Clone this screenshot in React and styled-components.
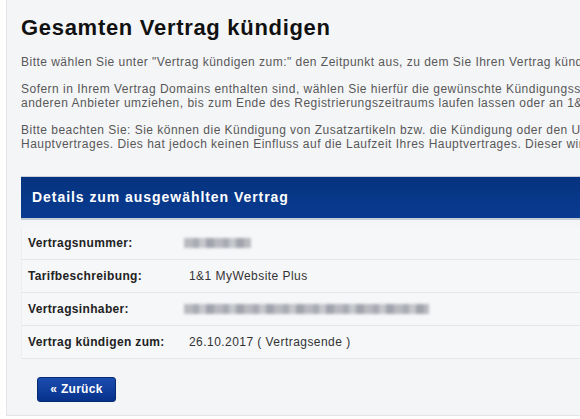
import React from "react"
import styled, { createGlobalStyle } from "styled-components"

const GlobalStyle = createGlobalStyle`
  html, body {
    margin: 0;
    padding: 0;
    background: #ffffff;
    overflow: hidden;
  }
  body {
    font-family: "Liberation Sans", Arial, sans-serif;
  }
`

// Contract rows shown in the details table
const rows = [
  { label: "Vertragsnummer:", hidden: 67 },
  { label: "Tarifbeschreibung:", value: "1&1 MyWebsite Plus" },
  { label: "Vertragsinhaber:", hidden: 245 },
  { label: "Vertrag kündigen zum:", value: "26.10.2017 ( Vertragsende )" },
]

const Panel = styled.main`
  width: 820px;
  margin-left: 6px;
  padding: 15px 0 13px 14px;
  background: #f4f5f7;
  border-left: 1px solid #e3e4e8;
  border-bottom: 1px solid #e3e4e8;
`

const Title = styled.h1`
  margin: 0 0 14px;
  font-size: 22px;
  line-height: 26px;
  font-weight: bold;
  letter-spacing: 0.7px;
  color: #111;
`

const Text = styled.p`
  margin: 0 0 12px;
  font-size: 12px;
  line-height: 14.5px;
  letter-spacing: 0.48px;
  color: #585858;
  white-space: nowrap;
`

const Details = styled.section`
  margin-top: 24px;
`

const Bar = styled.div`
  height: 41px;
  display: flex;
  align-items: center;
  padding-left: 11px;
  background: linear-gradient(#06337f, #083b91);
  border-top: 1px solid #c9ced6;
  border-bottom: 2px solid #c6ccd6;
  color: #fff;
  font-size: 14px;
  font-weight: bold;
  letter-spacing: 0.95px;
`

const Table = styled.div`
  margin-top: 7px;
  border-left: 1px solid #eceef1;
  background: #f6f7f9;
`

const Row = styled.div`
  display: grid;
  grid-template-columns: 161px 1fr;
  align-items: center;
  height: 32px;
  padding-left: 6px;
  border-bottom: 1px solid #e4e6ea;
  font-size: 12px;
  letter-spacing: 0.45px;
  color: #333;
`

const Label = styled.span`
  font-weight: bold;
  letter-spacing: 0.35px;
  color: #222;
`

const Redacted = styled.span`
  display: block;
  height: 10px;
  margin-left: -5px;
  background: repeating-linear-gradient(
    90deg,
    #b9bac0 0 9px,
    #a9abb3 9px 15px,
    #c6c7cc 15px 22px,
    #a2a4ad 22px 30px
  );
  filter: blur(1.4px);
`

const Actions = styled.div`
  padding: 18px 0 0 16px;
`

const Button = styled.button`
  width: 79px;
  height: 25px;
  padding: 0;
  border: 1px solid #042a72;
  border-radius: 3px;
  background: linear-gradient(#1b4db0, #06318a);
  color: #fff;
  font-family: "Liberation Sans", Arial, sans-serif;
  font-size: 12px;
  font-weight: bold;
  letter-spacing: 0.3px;
  cursor: pointer;
`

export default function App() {
  return (
    <>
      <GlobalStyle />
      <Panel>
        <Title>Gesamten Vertrag kündigen</Title>
        <Text>
          Bitte wählen Sie unter "Vertrag kündigen zum:" den Zeitpunkt aus, zu dem Sie Ihren Vertrag kündigen möchten.
        </Text>
        <Text>
          Sofern in Ihrem Vertrag Domains enthalten sind, wählen Sie hierfür die gewünschte Kündigungsstrategie aus. Sie können Ihre Domains zu einem
          <br />
          anderen Anbieter umziehen, bis zum Ende des Registrierungszeitraums laufen lassen oder an 1&1 zurückgeben.
        </Text>
        <Text>
          Bitte beachten Sie: Sie können die Kündigung von Zusatzartikeln bzw. die Kündigung oder den Umzug von Domains nur bis zum Ende der Laufzeit des
          <br />
          Hauptvertrages. Dies hat jedoch keinen Einfluss auf die Laufzeit Ihres Hauptvertrages. Dieser wird weiterhin fortgeführt.
        </Text>

        <Details>
          <Bar>Details zum ausgewählten Vertrag</Bar>
          <Table>
            {rows.map(({ label, value, hidden }) => (
              <Row key={label}>
                <Label>{label}</Label>
                {hidden ? <Redacted style={{ width: hidden }} /> : <span>{value}</span>}
              </Row>
            ))}
          </Table>
        </Details>

        <Actions>
          <Button>« Zurück</Button>
        </Actions>
      </Panel>
    </>
  )
}
